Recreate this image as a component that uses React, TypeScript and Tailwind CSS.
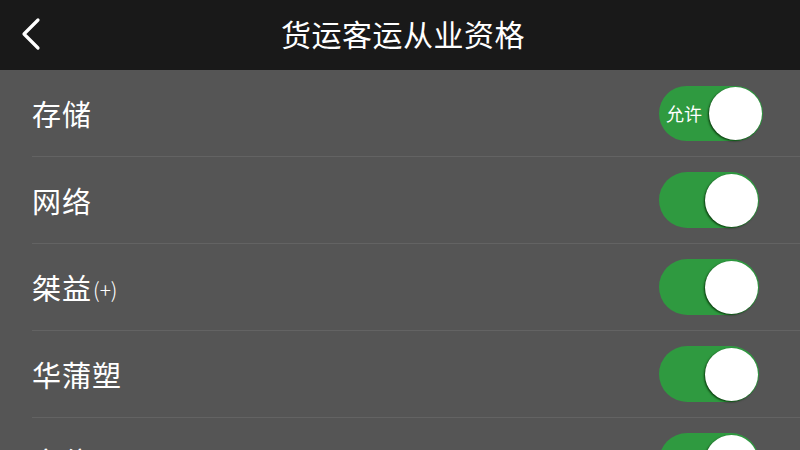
const rows = [
  { label: '存储', note: '', text: '允许', wide: true },
  { label: '网络', note: '', text: '', wide: false },
  { label: '桀益', note: '(+)', text: '', wide: false },
  { label: '华蒲塑', note: '', text: '', wide: false },
  { label: '定位', note: '', text: '', wide: false },
]

function Toggle({ text, wide }: { text: string; wide: boolean }) {
  return (
    <div
      className={`flex items-center rounded-full bg-[#2f9a40] p-px ${
        wide ? 'w-[104px] h-[55px]' : 'w-[100px] h-[56px] mr-[4px]'
      }`}
    >
      <span className="flex-1 pl-[6px] text-[18px] leading-none text-white">{text}</span>
      <div className="w-[53px] h-[53px] rounded-full bg-white shadow-[-1px_1px_2px_rgba(0,40,0,0.8)]" />
    </div>
  )
}

export default function App() {
  return (
    <div
      className="w-[800px] h-[450px] overflow-hidden bg-[#555555] text-white"
      style={{ fontFamily: '"Noto Sans CJK SC", "Noto Sans", sans-serif' }}
    >
      {/* Header */}
      <div className="relative h-[70px] bg-[#191919] flex items-center justify-center">
        <svg className="absolute left-[18px] top-[17px]" width="26" height="34" viewBox="0 0 26 34">
          <polyline points="20,3 6,17 20,31" fill="none" stroke="white" strokeWidth="3.2" strokeLinecap="round" strokeLinejoin="round" />
        </svg>
        <h1 className="text-[30px] leading-none tracking-[0.5px] ml-[6px] mb-[4px]">货运客运从业资格</h1>
      </div>

      {/* Settings list */}
      <div className="flex flex-col">
        {rows.map((row) => (
          <div key={row.label} className="pl-[32px]">
            <div className="h-[87px] flex items-center justify-between pr-[37px] border-b border-[#636363]">
              <div className="flex items-center">
                <span className="text-[29px] leading-none tracking-[1px]">{row.label}</span>
                {row.note && (
                  <span className="text-[21px] leading-none font-light ml-[1px] mt-[4px]">{row.note}</span>
                )}
              </div>
              <Toggle text={row.text} wide={row.wide} />
            </div>
          </div>
        ))}
      </div>
    </div>
  )
}
